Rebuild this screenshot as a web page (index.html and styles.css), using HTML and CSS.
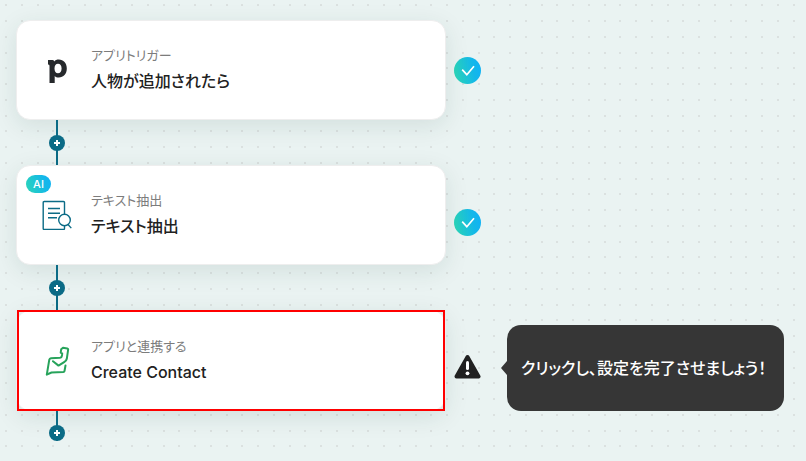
FILE: index.html
```html
<!DOCTYPE html>
<html lang="ja">
<head>
  <meta charset="UTF-8" />
  <meta name="viewport" content="width=device-width, initial-scale=1.0" />
  <title>フロー</title>
  <link rel="stylesheet" href="styles.css">
</head>
<body>

  <main class="flow">
    <section class="step">
      <div class="card">
        <div class="card-icon">
          <svg width="30" height="30" viewBox="0 0 30 30">
            <path fill="#26292c" fill-rule="evenodd" d="M6 5h4.500q1.400 0 1.700 1.400C13.300 5.100 14.800 4.500 16.800 4.500c4.700 0 8 3.700 8 9s-3.300 9-8 9c-1.800 0-3.100-.6-4.100-1.600V28H7.500V10.800Q7.500 9.500 6 9.500ZM16 8.700c-2.200 0-3.500 1.900-3.500 4.800s1.300 4.800 3.500 4.800 3.600-1.900 3.600-4.800-1.400-4.800-3.600-4.800Z"/>
          </svg>
        </div>
        <div class="card-text">
          <p class="card-label">アプリトリガー</p>
          <h3 class="card-title">人物が追加されたら</h3>
        </div>
      </div>
      <div class="step-side">
        <svg class="status" width="27" height="27" viewBox="0 0 27 27">
          <defs>
            <linearGradient id="done" x1="0" y1=".6" x2="1" y2=".4">
              <stop offset="0" stop-color="#2bd6b8"/>
              <stop offset=".7" stop-color="#14b8e8"/>
              <stop offset="1" stop-color="#10b2f5"/>
            </linearGradient>
          </defs>
          <circle cx="13.500" cy="13.500" r="13.500" fill="url(#done)"/>
          <path d="M8.200 12.700l4.600 5 7.200-8.500" fill="none" stroke="#fff" stroke-width="1.700"/>
        </svg>
      </div>
    </section>

    <div class="connector">
      <button class="add-btn" aria-label="ステップを追加"></button>
    </div>

    <section class="step">
      <div class="card">
        <span class="ai-badge">AI</span>
        <div class="card-icon">
          <svg width="30" height="30" viewBox="0 0 30 30" fill="none" stroke="#0b6b86" stroke-width="1.400">
            <path d="M22.500 14V2.500q0-1-1-1H2.200q-1 0-1 1V28.500q0 1 1 1h19.300q1 0 1-1v-3"/>
            <path d="M6 8.500h12M6 13.200h12M6 17.800h9"/>
            <circle cx="22.500" cy="20" r="5.800"/>
            <path d="M26 24.500l3.300 3.600"/>
          </svg>
        </div>
        <div class="card-text">
          <p class="card-label">テキスト抽出</p>
          <h3 class="card-title">テキスト抽出</h3>
        </div>
      </div>
      <div class="step-side lowered">
        <svg class="status" width="27" height="27" viewBox="0 0 27 27">
          <circle cx="13.500" cy="13.500" r="13.500" fill="url(#done)"/>
          <path d="M8.200 12.700l4.600 5 7.200-8.500" fill="none" stroke="#fff" stroke-width="1.700"/>
        </svg>
      </div>
    </section>

    <div class="connector">
      <button class="add-btn" aria-label="ステップを追加"></button>
    </div>

    <section class="step">
      <div class="card card-selected">
        <div class="card-icon">
          <svg width="30" height="30" viewBox="0 0 30 30" fill="none" stroke="#27a35b" stroke-width="2" stroke-linecap="round" stroke-linejoin="round">
            <path d="M23.500 19.500l-1 5.500q-.2 1-1.200 1.100L9.500 26.500 4.800 28.700 7.300 13.700q.3-1.400 1.600-1.500L18 11.700q1.700-.2 1.900-1.900l.3-2.300-1.500-.8.5-3.500 1.800-1.500 4.300.7q1 .3.800 1.400l-1.300 9q-.4 2.100-2.300 3l-6 3.800-5.500-4.400"/>
          </svg>
        </div>
        <div class="card-text">
          <p class="card-label">アプリと連携する</p>
          <h3 class="card-title">Create Contact</h3>
        </div>
      </div>
      <div class="step-side lowered">
        <svg class="status status-warn" width="27" height="27" viewBox="0 0 27 27">
          <path d="M13.500 4L24.500 23.500H2.500Z" fill="#212121" stroke="#212121" stroke-width="4" stroke-linejoin="round"/>
          <path d="M13.500 9.500v6" stroke="#fff" stroke-width="3" stroke-linecap="round"/>
          <circle cx="13.500" cy="20.300" r="1.900" fill="#fff"/>
        </svg>
        <div class="tooltip" role="status">クリックし、設定を完了させましょう！</div>
      </div>
    </section>

    <div class="connector connector-last">
      <button class="add-btn" aria-label="ステップを追加"></button>
    </div>
  </main>

</body>
</html>
```

FILE: styles.css
```css
* {
  box-sizing: border-box;
}

body {
  margin: 0;
  min-height: 100vh;
  font-family: Inter, "Noto Sans CJK JP", sans-serif;
  font-feature-settings: "palt";
  color: #212121;
  background-color: #eaf3f2;
  /* dotted canvas */
  background-image: url("data:image/svg+xml,%3Csvg xmlns='http://www.w3.org/2000/svg' width='63' height='63'%3E%3Cpath d='M5 5h58M5 21h58M5 37h58M5 53h58' stroke='%23dbe1e0' stroke-width='2' stroke-dasharray='2 14 2 14 2 13 2 14'/%3E%3C/svg%3E");
}

.flow {
  padding: 20px 22px 20px 16px;
}

.step {
  display: flex;
  align-items: center;
}

.card {
  position: relative;
  display: flex;
  align-items: center;
  gap: 19px;
  flex: 0 0 430px;
  height: 100px;
  padding: 0 25px;
  background: #fff;
  border: 1px solid #eeeeee;
  border-radius: 14px;
  box-shadow: 0 6px 24px rgba(0, 60, 50, 0.1);
}

.card-selected {
  height: 101px;
}

/* red frame over the selected card */
.card-selected::after {
  content: "";
  position: absolute;
  inset: -1px 0;
  border: 2px solid #f00;
}

.card-icon {
  flex: none;
  width: 30px;
  height: 30px;
}

.card-icon svg,
.status {
  display: block;
}

.card-text {
  padding-bottom: 3px;
}

.card-label {
  margin: 0 0 5px;
  font-size: 13px;
  line-height: 20px;
  color: #7c7c7c;
}

.card-title {
  margin: 0;
  font-size: 16px;
  font-weight: 500;
  line-height: 22px;
}

.ai-badge {
  position: absolute;
  top: 9px;
  left: 9px;
  width: 25px;
  height: 18px;
  border-radius: 9px;
  background: linear-gradient(70deg, #2bd6b8, #14b8e8 70%, #10b2f5);
  color: #fff;
  font-size: 11px;
  font-weight: 500;
  line-height: 18px;
  text-align: center;
}

.step-side {
  display: flex;
  align-items: center;
  gap: 26px;
  margin-left: 8px;
}

.lowered {
  margin-top: 15px;
}

.status {
  flex: none;
}

.status-warn {
  margin-bottom: 4px;
}

.connector {
  position: relative;
  display: flex;
  align-items: center;
  justify-content: center;
  width: 2px;
  height: 45px;
  margin-left: 40px;
  background: #0b6b86;
}

.connector-last {
  align-items: flex-end;
  height: 30px;
}

.add-btn {
  flex: none;
  width: 16px;
  height: 16px;
  padding: 0;
  border: none;
  border-radius: 50%;
  cursor: pointer;
  /* plus sign */
  background:
    linear-gradient(#fff, #fff) center / 6px 2px no-repeat,
    linear-gradient(#fff, #fff) center / 2px 6px no-repeat,
    #0b6b86;
}

.tooltip {
  position: relative;
  padding: 31px 18px 31px 14px;
  border-radius: 14px;
  background: #363636;
  color: #fff;
  font-size: 16px;
  font-weight: 500;
  line-height: 24px;
  white-space: nowrap;
}

.tooltip::before {
  content: "";
  position: absolute;
  top: 50%;
  left: -6px;
  border: 7px solid transparent;
  border-left: none;
  border-right: 6px solid #363636;
  transform: translateY(-50%);
}
```
